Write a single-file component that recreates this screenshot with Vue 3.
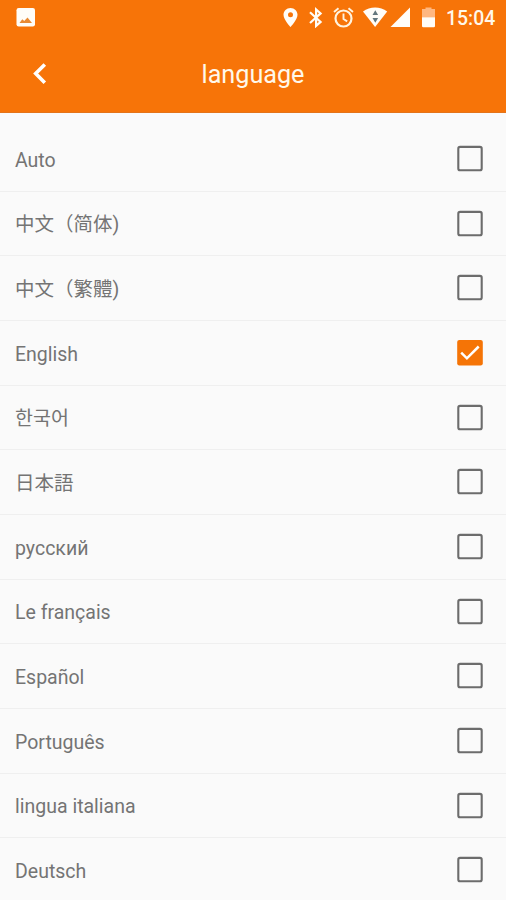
<script setup>
import { ref } from 'vue'

const languages = [
  { name: 'Auto', lang: 'en' },
  { name: '中文（简体)', lang: 'zh-CN' },
  { name: '中文（繁體)', lang: 'zh-TW' },
  { name: 'English', lang: 'en' },
  { name: '한국어', lang: 'ko' },
  { name: '日本語', lang: 'ja' },
  { name: 'русский', lang: 'ru' },
  { name: 'Le français', lang: 'fr' },
  { name: 'Español', lang: 'es' },
  { name: 'Português', lang: 'pt' },
  { name: 'lingua italiana', lang: 'it' },
  { name: 'Deutsch', lang: 'de' },
]
const selected = ref('English')
</script>

<template>
  <div class="screen">
    <header class="header">
      <div class="status">
        <svg class="photo" width="20" height="20" viewBox="0 0 20 20">
          <rect x=".5" y="1" width="18.500" height="18.500" rx="2.200" fill="#fffdf8" />
          <path d="M3.500 16 6.300 12.200 8.200 14 11.500 10.400 16 16Z" fill="#e98a32" />
        </svg>
        <svg class="tray" width="170" height="28" viewBox="0 0 170 28" fill="#fffdf8">
          <path d="M20.500 8c-4 0-7 3-7 6.800 0 5 7 12.200 7 12.200s7-7.200 7-12.200C27.500 11 24.500 8 20.500 8Zm0 4.200a2.500 2.500 0 1 1 0 5 2.500 2.500 0 0 1 0-5Z" fill-rule="evenodd" />
          <path d="m40 12.200 10.600 9.700-4.500 4V9.500l4.500 3.900L40 23" fill="none" stroke="#fffdf8" stroke-width="2.200" />
          <g fill="none" stroke="#fff3df" stroke-width="2.200">
            <circle cx="73.500" cy="18.500" r="8" />
            <path d="M73.500 13.500v5.500l3.700 2.400M64 12l4.500-3.800M83 12l-4.500-3.800" stroke-width="1.900" />
          </g>
          <path d="M93 11.500c7-5.300 17.200-5.300 24.200 0L105.100 27Z" />
          <path d="m105.300 10.300 2.800 4.700h-5.600ZM105.300 22.800l-2.800-4.700h5.600Z" fill="#64777c" />
          <path d="M140 7.500V27h-19.500Z" />
          <path d="M152 9h3.500V7.500h6V9h3.500v8.500h-13V9Z" fill="#ffb780" />
          <path d="M152 17.200h13V26q0 1.200-1.200 1.200h-10.600Q152 27.200 152 26Z" />
        </svg>
        <span class="clock">15:04</span>
      </div>
      <div class="toolbar">
        <button class="back" aria-label="Back">
          <svg width="16" height="24" viewBox="0 0 16 24">
            <path d="M12.800 2.500 3.700 11.600l9.100 9.100" fill="none" stroke="#fff" stroke-width="3.600" />
          </svg>
        </button>
        <h1>language</h1>
      </div>
    </header>
    <ul class="list">
      <li v-for="item in languages" :key="item.name" class="row" @click="selected = item.name">
        <span class="name" :lang="item.lang">{{ item.name }}</span>
        <svg class="box" width="28" height="28" viewBox="0 0 28 28">
          <template v-if="selected === item.name">
            <rect x="1.200" y=".9" width="25.600" height="25.600" rx="2.200" fill="#f57406" />
            <path d="m5.200 13.700 5.700 5.600L22.700 7.500" fill="none" stroke="#fff" stroke-width="2.500" />
          </template>
          <rect v-else x="2.300" y="1.900" width="23.400" height="23.400" rx="1.800" fill="none" stroke="#6c6c6c" stroke-width="2.100" />
        </svg>
      </li>
    </ul>
  </div>
</template>

<style>
body {
  margin: 0;
  background: #fafafa;
}
</style>

<style scoped>
.screen {
  width: 100%;
  height: 900px;
  overflow: hidden;
  background: #fafafa;
  font-family: Roboto, sans-serif;
}
.header {
  box-sizing: border-box;
  height: 113px;
  background: #f77408;
  border-bottom: 1px solid #e4741a;
  color: #fff8ea;
}
.status {
  display: flex;
  align-items: flex-start;
  height: 36px;
}
.photo {
  margin: 7px 0 0 16px;
}
.tray {
  margin-left: auto;
}
.clock {
  width: 66px;
  box-sizing: border-box;
  padding: 7px 0 0 6px;
  font-size: 19.400px;
  line-height: 23px;
  font-weight: 500;
}
.toolbar {
  display: grid;
  grid-template-columns: 80px 1fr 80px;
  align-items: center;
  height: 76px;
}
.back {
  display: flex;
  justify-content: center;
  padding: 0;
  border: 0;
  background: none;
}
h1 {
  margin: 0;
  padding-top: 2px;
  text-align: center;
  font-size: 25.200px;
  line-height: 30px;
  font-weight: 400;
}
.list {
  margin: 0;
  padding: 14px 0 0;
  list-style: none;
}
.row {
  display: flex;
  align-items: center;
  justify-content: space-between;
  box-sizing: border-box;
  height: 64.680px;
  padding: 0 22px 0 15px;
  border-bottom: 1px solid #efefef;
}
.name {
  color: #747474;
  font-size: 19.500px;
  line-height: 28px;
  padding-top: 3.500px;
  white-space: nowrap;
}
.name:lang(zh-CN),
.name:lang(zh-TW) {
  font-family: Roboto, "Noto Sans CJK SC", sans-serif;
}
.name:lang(ko) {
  font-family: Roboto, "Noto Sans CJK KR", sans-serif;
}
.name:lang(ja) {
  font-family: Roboto, "Noto Sans CJK JP", sans-serif;
}
.box {
  flex: none;
}
</style>
